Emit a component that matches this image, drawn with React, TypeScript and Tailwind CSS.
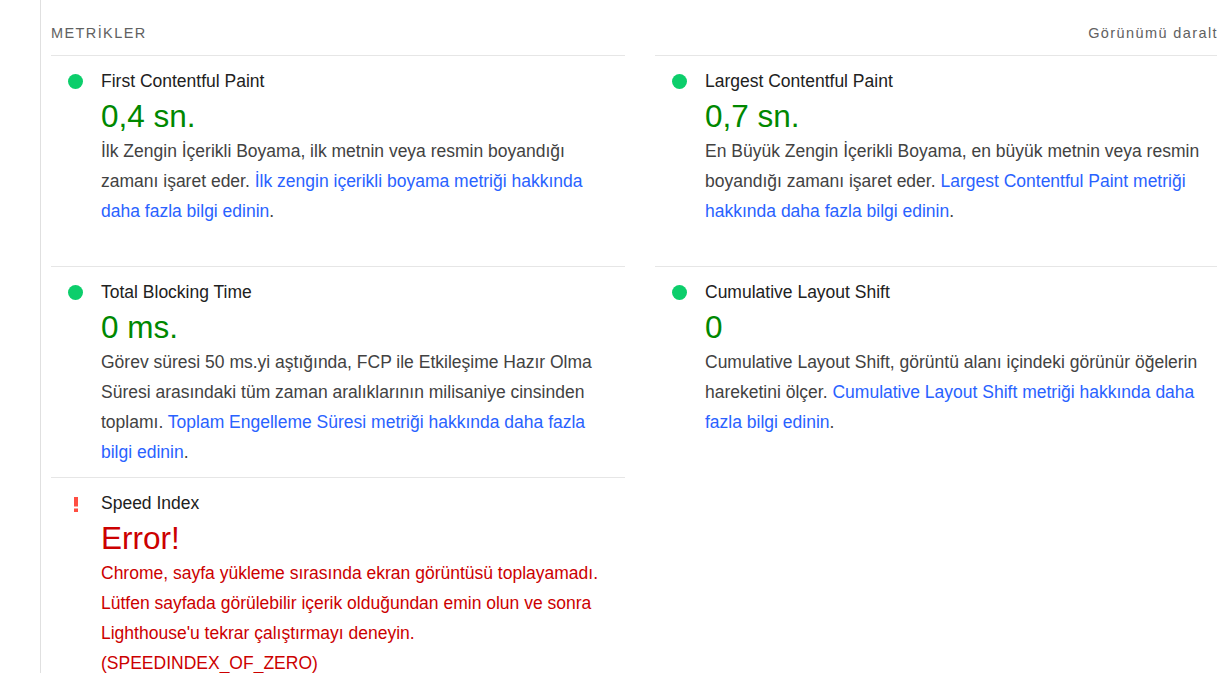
import React from "react";

type Metric = {
  title: string;
  value: string;
  status: "pass" | "error";
  desc: React.ReactNode;
};

const Link = ({ children }: { children: React.ReactNode }) => (
  <span className="text-[#2962ff]">{children}</span>
);

const metrics: Metric[] = [
  {
    title: "First Contentful Paint",
    value: "0,4 sn.",
    status: "pass",
    desc: (
      <>
        İlk Zengin İçerikli Boyama, ilk metnin veya resmin boyandığı zamanı işaret eder.{" "}
        <Link>İlk zengin içerikli boyama metriği hakkında daha fazla bilgi edinin</Link>.
      </>
    ),
  },
  {
    title: "Largest Contentful Paint",
    value: "0,7 sn.",
    status: "pass",
    desc: (
      <>
        En Büyük Zengin İçerikli Boyama, en büyük metnin veya resmin boyandığı zamanı işaret eder.{" "}
        <Link>Largest Contentful Paint metriği hakkında daha fazla bilgi edinin</Link>.
      </>
    ),
  },
  {
    title: "Total Blocking Time",
    value: "0 ms.",
    status: "pass",
    desc: (
      <>
        Görev süresi 50 ms.yi aştığında, FCP ile Etkileşime Hazır Olma Süresi arasındaki tüm zaman aralıklarının milisaniye cinsinden toplamı.{" "}
        <Link>Toplam Engelleme Süresi metriği hakkında daha fazla bilgi edinin</Link>.
      </>
    ),
  },
  {
    title: "Cumulative Layout Shift",
    value: "0",
    status: "pass",
    desc: (
      <>
        Cumulative Layout Shift, görüntü alanı içindeki görünür öğelerin hareketini ölçer.{" "}
        <Link>Cumulative Layout Shift metriği hakkında daha fazla bilgi edinin</Link>.
      </>
    ),
  },
  {
    title: "Speed Index",
    value: "Error!",
    status: "error",
    desc: (
      <>
        Chrome, sayfa yükleme sırasında ekran görüntüsü toplayamadı. Lütfen sayfada görülebilir içerik olduğundan emin olun ve sonra Lighthouse'u tekrar çalıştırmayı deneyin. (SPEEDINDEX_OF_ZERO)
      </>
    ),
  },
];

function MetricCell({ m }: { m: Metric }) {
  const isErr = m.status === "error";
  return (
    <div className="border-t border-[#e6e6e6] pt-[10px] pb-[10px] flex">
      <div className="w-[50px] shrink-0 h-[30px] flex items-center justify-center">
        {isErr ? (
          <svg width="4" height="15" viewBox="0 0 4 15" className="mt-[2px]">
            <rect x="0" y="0" width="4" height="9.5" fill="#ff4e42" />
            <rect x="0" y="11.5" width="4" height="3.5" fill="#ff4e42" />
          </svg>
        ) : (
          <span className="block w-[15px] h-[15px] rounded-full bg-[#0cce6b] mt-[1px] mr-[1px]" />
        )}
      </div>
      <div className="w-[510px]">
        <div className="text-[17.5px] leading-[30px] text-[#212121]">{m.title}</div>
        <div
          className={
            "text-[31.5px] leading-[40px] " + (isErr ? "text-[#cc0000]" : "text-[#008800]")
          }
        >
          {m.value}
        </div>
        <div
          className={
            "text-[17.5px] leading-[30px] " + (isErr ? "text-[#cc0000]" : "text-[#424242]")
          }
        >
          {m.desc}
        </div>
      </div>
    </div>
  );
}

export default function App() {
  return (
    <div className="w-[1217px] h-[673px] overflow-hidden bg-white flex font-['Liberation_Sans',Arial,sans-serif]">
      <div className="w-[40px] shrink-0" />
      <div className="shrink-0 border-l border-[#e0e0e0] pl-[10px] w-[1189px]">
        <div className="w-[1178px]">
          <div className="h-[55px] pt-[13px] flex items-center justify-between">
            <span className="text-[14.5px] tracking-[1.4px] text-[#616161] uppercase">METRİKLER</span>
            <span className="text-[14.5px] tracking-[1.4px] text-[#616161] pr-[11px]">Görünümü daralt</span>
          </div>
          <div className="grid grid-cols-[574px_574px] gap-x-[30px] auto-rows-fr">
            {metrics.map((m) => (
              <MetricCell key={m.title} m={m} />
            ))}
          </div>
        </div>
      </div>
    </div>
  );
}
